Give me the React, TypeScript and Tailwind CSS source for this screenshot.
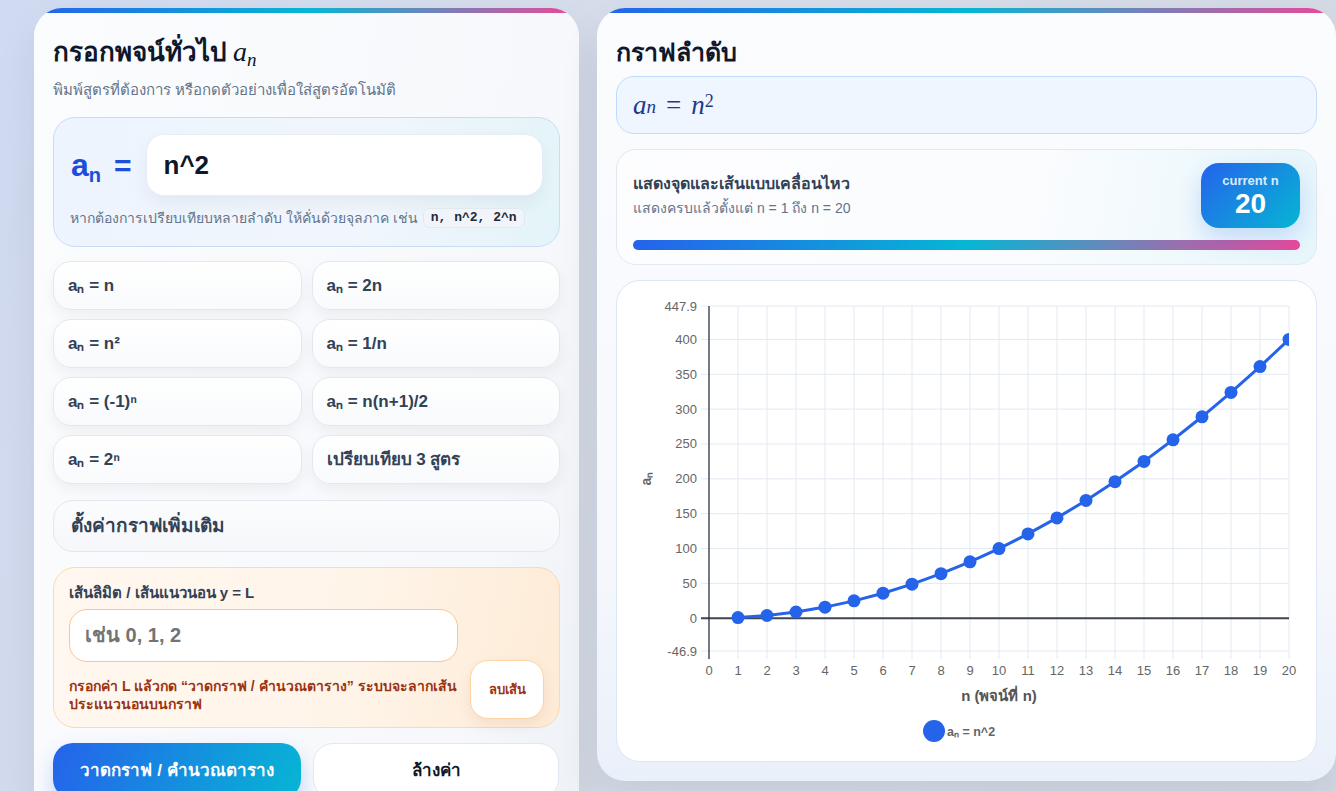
import React from "react";

const ticksY = [447.9, 400, 350, 300, 250, 200, 150, 100, 50, 0, -46.9];
const PL = 92;
const PR = 672;
const PT = 25;
const PB = 370;
const yMax = 447.9;
const yMin = -46.9;
const sy = (v: number) => PT + ((yMax - v) / (yMax - yMin)) * (PB - PT);
const sx = (n: number) => PL + n * 29;

function Chart() {
  const pts = Array.from({ length: 20 }, (_, i) => i + 1).map((n) => [sx(n), sy(n * n)]);
  const d = pts.map((p, i) => `${i === 0 ? "M" : "L"}${p[0].toFixed(1)},${p[1].toFixed(1)}`).join(" ");
  return (
    <svg width="697" height="480" viewBox="0 0 697 480" className="block">
      <defs>
        <clipPath id="plotclip">
          <rect x={PL - 10} y={PT - 10} width={PR - PL + 10} height={PB - PT + 20} />
        </clipPath>
      </defs>
      {Array.from({ length: 21 }, (_, n) => (
        <line key={"v" + n} x1={sx(n)} x2={sx(n)} y1={PT} y2={PB + 8} stroke="#e3e9f2" strokeWidth="1" />
      ))}
      {ticksY.map((v) => (
        <line
          key={"h" + v}
          x1={PL - 8}
          x2={PR}
          y1={sy(v)}
          y2={sy(v)}
          stroke={v === 0 ? "#3f4550" : "#e3e9f2"}
          strokeWidth={v === 0 ? 2 : 1}
        />
      ))}
      <line x1={PL} x2={PL} y1={PT} y2={PB + 8} stroke="#1e293b" strokeWidth="1.2" />
      {ticksY.map((v) => (
        <text key={"t" + v} x={PL - 12} y={sy(v) + 4.5} textAnchor="end" fontSize="13" fill="#666" fontFamily="Liberation Sans, sans-serif">
          {String(v)}
        </text>
      ))}
      {Array.from({ length: 21 }, (_, n) => (
        <text key={"x" + n} x={sx(n)} y={PB + 24} textAnchor="middle" fontSize="13" fill="#666" fontFamily="Liberation Sans, sans-serif">
          {n}
        </text>
      ))}
      <text x={(PL + PR) / 2} y={PB + 50} textAnchor="middle" fontSize="15" fontWeight="700" fill="#555" fontFamily="Liberation Sans, sans-serif">
        n (พจน์ที่ n)
      </text>
      <text
        x={34}
        y={(PT + PB) / 2}
        textAnchor="middle"
        fontSize="14"
        fontWeight="700"
        fill="#666"
        fontFamily="Liberation Sans, sans-serif"
        transform={`rotate(-90 34 ${(PT + PB) / 2})`}
      >
        aₙ
      </text>
      <g clipPath="url(#plotclip)">
        <path d={d} fill="none" stroke="#2563eb" strokeWidth="3" strokeLinejoin="round" />
        {pts.map((p, i) => (
          <circle key={i} cx={p[0]} cy={p[1]} r="6.5" fill="#2563eb" />
        ))}
      </g>
      <circle cx={317} cy={450} r={11} fill="#2563eb" />
      <text x={330} y={454.5} fontSize="12.5" fontWeight="700" fill="#666" fontFamily="Liberation Sans, sans-serif">
        aₙ = n^2
      </text>
    </svg>
  );
}

function Preset({ children, normal }: { children: React.ReactNode; normal?: boolean }) {
  return (
    <button
      className={`h-[49px] rounded-[18px] border border-[#e2e8f0] bg-[linear-gradient(180deg,#ffffff,#f8fafc)] px-[14px] text-left text-[17px] text-[#334155] shadow-[0_6px_14px_rgba(15,23,42,0.05)] ${
        normal ? "font-semibold" : "font-bold"
      }`}
    >
      {children}
    </button>
  );
}

function TopBar() {
  return <div className="h-[5px] w-full bg-[linear-gradient(90deg,#2563eb,#06b6d4_50%,#ec4899)]" />;
}

export default function App() {
  return (
    <div className="h-screen w-full overflow-hidden bg-[linear-gradient(110deg,#d0daf1,#d6dce8_45%,#d3d9e3)] font-['Liberation_Sans',sans-serif]">
      <div className="grid grid-cols-[545px_739px] items-start gap-[18px] pl-[34px] pt-[8px]">
        {/* LEFT CARD */}
        <div className="overflow-hidden rounded-[28px] bg-[linear-gradient(100deg,#fbfcfe,#f6f8fb_80%,#eef1f6)] shadow-[0_20px_40px_rgba(15,23,42,0.08)]">
          <TopBar />
          <div className="px-[19px] pb-[20px] pt-[23px]">
            <h2 className="flex items-baseline gap-[6px] text-[26px] font-bold leading-[32px] text-[#0f172a]">
              <span>กรอกพจน์ทั่วไป</span>
              <span className="font-['Liberation_Serif',serif] text-[28px] font-normal italic">
                a<sub className="text-[19px]">n</sub>
              </span>
            </h2>
            <p className="mt-[12px] text-[15px] leading-[20px] text-[#64748b]">
              พิมพ์สูตรที่ต้องการ หรือกดตัวอย่างเพื่อใส่สูตรอัตโนมัติ
            </p>

            <div className="mt-[17px] rounded-[22px] border border-[#c9dcf7] bg-[linear-gradient(100deg,#edf4fe,#f1f6fd_60%,#e3f4f9)] px-[16px] pb-[18px] pt-[16px]">
              <div className="flex items-center gap-[14px]">
                <div className="flex items-baseline pl-[1px] text-[#1d4ed8]">
                  <span className="text-[32px] font-bold leading-none">a</span>
                  <span className="relative top-[6px] text-[20px] font-bold leading-none">n</span>
                  <span className="ml-[13px] text-[30px] font-bold leading-none">=</span>
                </div>
                <input
                  readOnly
                  value="n^2"
                  className="h-[62px] flex-1 rounded-[18px] border border-[#e6edf7] bg-white px-[17px] text-[26px] font-bold text-[#0f172a] shadow-[0_8px_18px_rgba(15,23,42,0.05)] outline-none"
                />
              </div>
              <div className="mt-[12px] flex h-[20px] items-center gap-[5px] text-[14px] leading-[20px] text-[#64748b]">
                <span>หากต้องการเปรียบเทียบหลายลำดับ ให้คั่นด้วยจุลภาค เช่น</span>
                <code className="rounded-[7px] border border-[#e2e8f0] bg-[#f1f5f9] px-[7px] py-[1px] font-['Liberation_Mono',monospace] text-[13px] font-bold leading-[16px] text-[#1e293b]">
                  n, n^2, 2^n
                </code>
              </div>
            </div>

            <div className="mt-[14px] grid grid-cols-2 gap-x-[10px] gap-y-[9px]">
              <Preset>aₙ = n</Preset>
              <Preset>aₙ = 2n</Preset>
              <Preset>aₙ = n²</Preset>
              <Preset>aₙ = 1/n</Preset>
              <Preset>aₙ = (-1)ⁿ</Preset>
              <Preset>aₙ = n(n+1)/2</Preset>
              <Preset>aₙ = 2ⁿ</Preset>
              <Preset normal>เปรียบเทียบ 3 สูตร</Preset>
            </div>

            <div className="mt-[16px] flex h-[52px] items-center rounded-[20px] border border-[#e2e8f0] bg-[linear-gradient(180deg,#fbfcfe,#f5f7fa)] px-[17px] text-[19px] font-bold text-[#334155]">
              ตั้งค่ากราฟเพิ่มเติม
            </div>

            <div className="mt-[15px] rounded-[22px] border border-[#fdd9ae] bg-[linear-gradient(100deg,#fff8f0,#fff4e8_60%,#fdebd6)] px-[15px] pb-[8px] pt-[15px]">
              <div className="text-[15px] font-bold leading-[20px] text-[#334155]">เส้นลิมิต / เส้นแนวนอน y = L</div>
              <div className="mt-[6px] flex items-end gap-[12px]">
                <div className="w-[390px] pb-[6px]">
                  <input
                    placeholder="เช่น 0, 1, 2"
                    className="h-[53px] w-full rounded-[18px] border border-[#fcc58a] bg-white px-[15px] text-[20px] font-bold outline-none placeholder:text-[#737373]"
                  />
                  <p className="mt-[15px] text-[14px] font-bold leading-[18px] text-[#9a3412]">
                    กรอกค่า L แล้วกด “วาดกราฟ / คำนวณตาราง” ระบบจะลากเส้น
                    <br />
                    ประแนวนอนบนกราฟ
                  </p>
                </div>
                <button className="h-[59px] w-[74px] rounded-[18px] border border-[#fdd3a4] bg-white text-[13px] font-semibold text-[#9a3412] shadow-[0_6px_14px_rgba(154,52,18,0.08)]">
                  ลบเส้น
                </button>
              </div>
            </div>

            <div className="mt-[15px] grid grid-cols-[248px_246px] gap-[12px]">
              <button className="h-[56px] rounded-[20px] bg-[linear-gradient(110deg,#2563eb,#06b6d4)] text-[17px] font-bold text-white shadow-[0_10px_20px_rgba(37,99,235,0.25)]">
                วาดกราฟ / คำนวณตาราง
              </button>
              <button className="h-[56px] rounded-[20px] border border-[#e2e8f0] bg-white text-[17px] font-bold text-[#0f172a]">
                ล้างค่า
              </button>
            </div>
          </div>
        </div>

        {/* RIGHT CARD */}
        <div className="overflow-hidden rounded-[28px] bg-[linear-gradient(180deg,#fbfcfe,#f6f8fc_70%,#eaf0fa)] shadow-[0_20px_40px_rgba(15,23,42,0.08)]">
          <TopBar />
          <div className="px-[19px] pb-[19px] pt-[23px]">
            <h2 className="text-[25px] font-bold leading-[32px] text-[#0f172a]">กราฟลำดับ</h2>

            <div className="mt-[8px] flex h-[58px] items-center rounded-[18px] border border-[#bfdbfe] bg-[#eff6ff] px-[16px] font-['Liberation_Serif',serif] text-[27px] italic text-[#1e3a8a]">
              <span>a</span>
              <sub className="relative top-[2px] text-[19px]">n</sub>
              <span className="mx-[10px] not-italic">=</span>
              <span>n</span>
              <sup className="relative top-[-4px] text-[18px] not-italic">2</sup>
            </div>

            <div className="mt-[15px] rounded-[20px] border border-[#e2e8f0] bg-[linear-gradient(100deg,#fdfdfe,#fafcfe_60%,#e6f6fb)] px-[16px] pb-[14px] pt-[13px]">
              <div className="flex items-center justify-between">
                <div>
                  <div className="text-[16px] font-bold leading-[22px] text-[#334155]">แสดงจุดและเส้นแบบเคลื่อนไหว</div>
                  <div className="mt-[3px] text-[14px] leading-[20px] text-[#64748b]">แสดงครบแล้วตั้งแต่ n = 1 ถึง n = 20</div>
                </div>
                <div className="flex h-[65px] w-[99px] flex-col items-center justify-center rounded-[18px] bg-[linear-gradient(135deg,#2563eb,#06b6d4)] shadow-[0_10px_24px_rgba(37,99,235,0.2)]">
                  <div className="text-[13px] font-bold leading-[16px] text-[#dbeafe]">current n</div>
                  <div className="text-[28px] font-extrabold leading-[30px] text-white">20</div>
                </div>
              </div>
              <div className="mt-[12px] h-[10px] w-full rounded-full bg-[linear-gradient(90deg,#2563eb,#06b6d4_50%,#ec4899)]" />
            </div>

            <div className="mt-[15px] rounded-[24px] border border-[#dbe6f6] bg-white">
              <Chart />
            </div>
          </div>
        </div>
      </div>
    </div>
  );
}
